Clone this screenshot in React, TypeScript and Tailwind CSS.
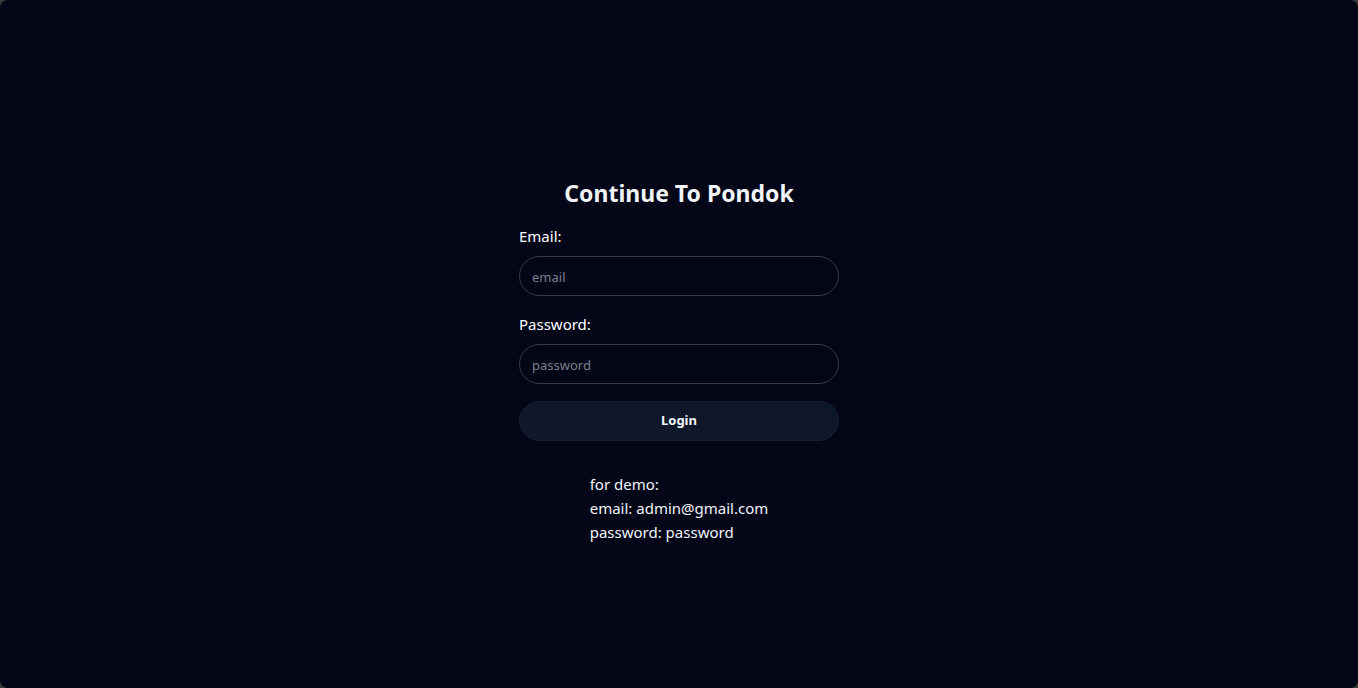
export default function App() {
  return (
    <div className="h-[688px] w-full bg-[#3a3a3a]">
      <div
        className="h-full w-full rounded-[8px] bg-[#020617] text-white flex flex-col items-center pt-[177px]"
        style={{ fontFamily: '"Noto Sans", "Open Sans", sans-serif' }}
      >
        <div className="w-80 flex flex-col">
          <h1 className="text-[23px] font-bold text-center leading-8 text-[#f1f5f9]">Continue To Pondok</h1>
          <label className="mt-[15px] text-[15px] leading-6">Email:</label>
          <input
            placeholder="email"
            className="mt-2 h-10 rounded-full border border-[#363a4a] bg-transparent px-3 pt-[2px] text-[13px] text-white placeholder:text-[#7c7f8c] outline-none"
          />
          <label className="mt-4 text-[15px] leading-6">Password:</label>
          <input
            placeholder="password"
            type="password"
            className="mt-2 h-10 rounded-full border border-[#363a4a] bg-transparent px-3 pt-[2px] text-[13px] text-white placeholder:text-[#7c7f8c] outline-none"
          />
          <button className="mt-[17px] h-10 rounded-full border border-[#161e30] bg-[#0f172a] text-[13px] font-bold text-[#f1f5f9]">Login</button>
        </div>
        <div className="mt-[31px] text-[15px] leading-6 text-[#f1f5f9]">
          <p>for demo:</p>
          <p>email: admin@gmail.com</p>
          <p>password: password</p>
        </div>
      </div>
    </div>
  );
}
